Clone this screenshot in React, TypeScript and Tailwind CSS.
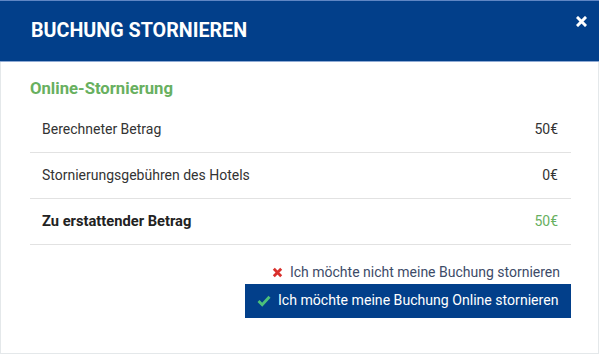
import React from "react";

const rows = [
  { label: "Berechneter Betrag", value: "50€", bold: false, green: false },
  { label: "Stornierungsgebühren des Hotels", value: "0€", bold: false, green: false },
  { label: "Zu erstattender Betrag", value: "50€", bold: true, green: true },
];

export default function App() {
  return (
    <div className="w-[599px] h-[355px] bg-white font-['Roboto',sans-serif]">
      <div className="w-[599px] h-[354px] flex flex-col border border-t-0 border-[#e4e8ea]">
        <div className="h-[62px] bg-[#023f8a] border-t border-[#5f86c4] border-b border-b-[#8faad4] -mx-px flex items-center justify-between pl-[31px] pr-[12px]">
          <h1 className="text-white font-bold text-[19.7px] leading-none -mt-[1px]">BUCHUNG STORNIEREN</h1>
          <svg width="11" height="11" viewBox="0 0 11 11" className="self-start mt-[15px]">
            <path d="M2 2 L9 9 M9 2 L2 9" stroke="white" strokeWidth="3" strokeLinecap="square" />
          </svg>
        </div>
        <div className="pl-[29px] pr-[27px] pt-[17px]">
          <h2 className="text-[#68b05f] font-bold text-[16.7px] leading-[20px]">Online-Stornierung</h2>
          <div className="mt-[8px]">
            {rows.map((r) => (
              <div key={r.label} className="h-[46px] flex items-center justify-between pl-[12px] pr-[13px] border-b border-[#e2e2e2] text-[14px]">
                <span className={r.bold ? "font-bold text-[#222] text-[14.7px]" : "text-[#333]"}>{r.label}</span>
                <span className={r.green ? "text-[#68b05f]" : "text-[#333]"}>{r.value}</span>
              </div>
            ))}
          </div>
          <div className="flex flex-col items-end mt-[18px]">
            <div className="flex items-center gap-[7px] pr-[11px] text-[14px] text-[#3d4b68] leading-[18px]">
              <svg width="11" height="11" viewBox="0 0 11 11">
                <path d="M1.8 1.8 L9.2 9.2 M9.2 1.8 L1.8 9.2" stroke="#d9302c" strokeWidth="2.8" />
              </svg>
              <span>Ich möchte nicht meine Buchung stornieren</span>
            </div>
            <button className="mt-[3px] h-[34px] w-[326px] bg-[#023f8a] flex items-center pl-[12px] gap-[7px] text-white text-[14.1px]">
              <svg width="14" height="12" viewBox="0 0 14 12">
                <path d="M1.5 6 L5.2 9.7 L12.5 1.8" stroke="#4cc17a" strokeWidth="2.8" fill="none" />
              </svg>
              <span>Ich möchte meine Buchung Online stornieren</span>
            </button>
          </div>
        </div>
      </div>
    </div>
  );
}
